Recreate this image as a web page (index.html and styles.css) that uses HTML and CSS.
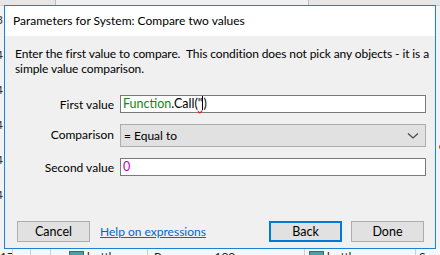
FILE: index.html
```html
<!DOCTYPE html>
<html>
<head>
  <title>Parameters for System: Compare two values</title>
  <link rel="stylesheet" href="styles.css">
</head>
<body>
  <div class="desk">
    <!-- the editor behind the dialog -->
    <div class="app">
      <div class="app-top"><div class="app-tab"></div></div>
      <div class="app-mid">
        <div class="num-col">
          <span>3</span><span>4</span><span>4</span><span>4</span><span>4</span><span>4</span>
        </div>
        <div class="right-col"><span>e</span></div>
      </div>
      <div class="app-row">
        <div class="cell c1">17</div>
        <div class="cell c2"></div>
        <div class="cell c3"></div>
        <div class="cell c4"><i class="ico"></i>bottle_pro</div>
        <div class="cell c5">Progress &nbsp; &nbsp; 100</div>
        <div class="cell c6"><i class="ico"></i>bottle_progress</div>
        <div class="cell c7">Se</div>
      </div>
    </div>

    <div class="dialog">
      <div class="title">Parameters for System: Compare two values</div>
      <div class="body">
        <p class="desc">Enter the first value to compare.&nbsp; This condition does not pick any objects - it is a simple value comparison.</p>

        <div class="form">
          <label class="lbl">First value</label>
          <div class="field"><span class="kw">Function</span>.Call(<span class="squig">"</span><span class="caret"></span>)</div>

          <label class="lbl lbl-cmp">Comparison</label>
          <div class="select">
            <span>= Equal to</span>
            <svg width="12" height="8" viewBox="0 0 12 8"><path d="M1 1.5 L6 6 L11 1.5" fill="none" stroke="#444" stroke-width="1.1"/></svg>
          </div>

          <label class="lbl">Second value</label>
          <div class="field field2"><span class="num">0</span></div>
        </div>

        <div class="footer">
          <button class="btn">Cancel</button>
          <a class="help" href="#">Help on expressions</a>
          <span class="spacer"></span>
          <button class="btn btn-default">Back</button>
          <button class="btn">Done</button>
        </div>
      </div>
    </div>
  </div>
</body>
</html>
```
FILE: styles.css
```css
body {
  margin: 0;
  padding: 0;
  font-family: Lato, "Liberation Sans", sans-serif;
  font-size: 12px;
  color: #000;
  overflow: hidden;
}

.desk {
  position: relative;
  width: 440px;
  height: 255px;
  overflow: hidden;
  background: #f3f3f3;
}

/* background app */
.app {
  display: flex;
  flex-direction: column;
  height: 255px;
}

.app-top {
  height: 5px;
  background: #e6e6e6;
  border-bottom: 1px solid #d0d0d0;
}

.app-tab {
  margin-left: 55px;
  width: 252px;
  height: 5px;
  background: #eef0f3;
  border-left: 1px solid #b8bcc4;
  border-right: 1px solid #b8bcc4;
}

.app-mid {
  flex: 1;
  display: flex;
  justify-content: space-between;
}

.num-col {
  display: flex;
  flex-direction: column;
  gap: 20px;
  padding-top: 6px;
  margin-left: -4px;
  color: #333;
}

.right-col {
  padding-top: 132px;
  margin-right: -5px;
  color: #333;
}

.app-row {
  display: flex;
  height: 7px;
  background: #f7f7f7;
  color: #222;
  line-height: 17px;
  white-space: nowrap;
  overflow: hidden;
}

.cell {
  border-right: 1px solid #cfcfcf;
  padding-left: 3px;
  overflow: hidden;
}

.c1 { width: 12px; margin-left: -3px; }
.c2 { width: 14px; }
.c3 { width: 16px; }
.c4 { padding-left: 18px; width: 78px; }
.c5 { width: 150px; padding-left: 6px; }
.c6 { width: 106px; padding-left: 4px; }
.c7 { flex: 1; border-right: 0; }

.ico {
  display: inline-block;
  width: 13px;
  height: 9px;
  border: 1px solid #2d6f7a;
  background: #4aa0a8;
  margin-right: 3px;
  vertical-align: -1px;
}

/* dialog */
.dialog {
  position: absolute;
  left: 4px;
  top: 5px;
  width: 430px;
  height: 242px;
  border: 1px solid #1883d7;
  display: flex;
  flex-direction: column;
  background: #f0f0f0;
}

.title {
  height: 30px;
  line-height: 29px;
  background: #fff;
  padding-left: 8px;
}

.body {
  flex: 1;
  display: flex;
  flex-direction: column;
}

.desc {
  margin: 10px 2px 0 10px;
  line-height: 15px;
  letter-spacing: -0.1px;
}

.form {
  display: grid;
  grid-template-columns: 109px 306px;
  column-gap: 6px;
  row-gap: 11px;
  align-items: center;
  margin-top: 19px;
}

.lbl {
  text-align: right;
}

.lbl-cmp {
  margin-top: -3px;
}

.field {
  height: 16px;
  line-height: 16px;
  background: #fff;
  border: 1px solid #7a7a7a;
  padding-left: 2px;
  white-space: nowrap;
  font-size: 12.5px;
}

.kw {
  color: #118811;
}

.squig {
  text-decoration: underline wavy #e02020;
}

.caret {
  display: inline-block;
  width: 1px;
  height: 14px;
  background: #000;
  vertical-align: -2px;
}

.num {
  color: #c000c0;
}

.select {
  height: 21px;
  background: #e1e1e1;
  border: 1px solid #adadad;
  display: flex;
  align-items: center;
  justify-content: space-between;
  padding: 0 6px 0 3px;
}

.footer {
  margin-top: auto;
  display: flex;
  align-items: center;
  padding: 0 11px 6px 12px;
}

.btn {
  width: 73px;
  height: 21px;
  background: #e1e1e1;
  border: 1px solid #adadad;
  font-family: inherit;
  font-size: 12.5px;
  padding: 0;
  color: #000;
}

.btn-default {
  border: 2px solid #0078d7;
  margin-right: 9px;
}

.help {
  margin-left: 10px;
  color: #0066cc;
}

.spacer {
  flex: 1;
}
```
